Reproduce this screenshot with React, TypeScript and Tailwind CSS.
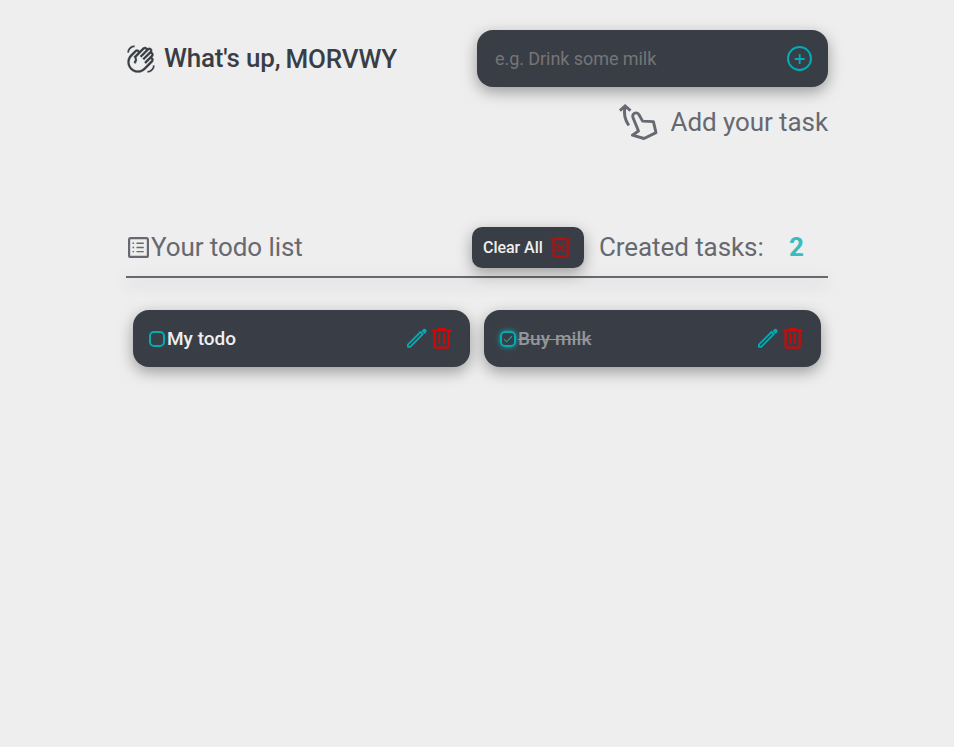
import React from 'react';
import { MdOutlineWavingHand } from 'react-icons/md';

function AddIcon() {
  return (
    <svg width="25" height="25" viewBox="0 0 25 25" fill="none" stroke="#00adb5" strokeWidth="2">
      <circle cx="12.5" cy="12.5" r="11.5" />
      <path d="M12.7 8v10M7.7 13h10" strokeWidth="1.8" />
    </svg>
  );
}

function SwipeUpIcon() {
  return (
    <svg width="42" height="38" viewBox="0 0 42 38" fill="none" stroke="currentColor" strokeWidth="2.9">
      <path d="M1.9 7.7L7.1 3l5.4 4.7M7.1 3.5C5.6 10 7 17 10.8 22.5" />
      <path d="M20.5 28L15 14.6a3.3 3.3 0 0 1 6-2.8L24.6 18.1l10.8.5L38 29.6 26 35.5l-11.6-3.4z" strokeLinejoin="round" />
    </svg>
  );
}

function ListIcon() {
  return (
    <svg className="mr-[2px] ml-[2px]" width="21" height="21" viewBox="0 0 21 21" fill="none" stroke="currentColor">
      <rect x="1.1" y="1.1" width="18.8" height="18.8" rx="1.5" strokeWidth="2.2" />
      <path d="M4.5 6.3h1.6M4.5 10.5h1.6M4.5 14.6h1.6M8.5 6.3h7.3M8.5 10.5h7.3M8.5 14.6h7.3" strokeWidth="1.4" />
    </svg>
  );
}

function PencilIcon() {
  return (
    <svg width="22" height="21" viewBox="0 0 22 21" fill="none" stroke="#00adb5">
      <path d="M1.9 18.8v-2.2L14.6 4l2.2 2.2L4.2 18.8z" strokeWidth="1.8" strokeLinejoin="round" />
      <path d="M15.7 2.9l1.3-1.3a2 2 0 0 1 3 3L18.7 5.9z" fill="#00adb5" stroke="none" />
    </svg>
  );
}

function TrashIcon({ cross = false }: { cross?: boolean }) {
  return (
    <svg width="22" height="21" viewBox="0 0 22 21" fill="none" stroke="currentColor" strokeWidth="2">
      <path d="M.7 2.3h19.8" />
      <path d="M6 2l1.2-2h6.8l1.2 2z" fill="currentColor" stroke="none" />
      <path d="M3.6 2.5v15.8a1.3 1.3 0 0 0 1.3 1.3h11.5a1.3 1.3 0 0 0 1.3-1.3V2.5" strokeWidth="2.2" />
      {cross ? <path d="M6.6 7.2l7.8 7.8M14.4 7.2L6.6 15" strokeWidth="1.8" /> : <path d="M8.3 5v11M13 5v11" strokeWidth="1.8" />}
    </svg>
  );
}

function Todo({ title, done = false }: { title: string; done?: boolean }) {
  return (
    <li className="flex h-[57px] w-[337px] items-center rounded-[16px] bg-[#393e46] pr-[17px] pl-4 shadow-[0_5px_15px_rgba(0,0,0,0.35)]">
      <span className={'mt-px mr-[2px] flex size-4 items-center justify-center rounded-[5px] border-2 border-[#00adb5] ' + (done ? 'shadow-[0_0_5px_#00adb5]' : '')}>
        {done && (
          <svg width="10" height="10" viewBox="0 0 10 10" fill="none" stroke="#00adb5" strokeWidth="1.1"><path d="M1 5.2l2.6 2.6L9 2.2" /></svg>
        )}
      </span>
      <span className={'text-[19px] leading-6 font-medium ' + (done ? 'tracking-[0.08px] text-[#949699] line-through decoration-1' : 'text-[#eeeeee]')}>{title}</span>
      <span className="ml-auto flex items-center gap-[3px] text-[#d10808]"><PencilIcon /><TrashIcon /></span>
    </li>
  );
}

export default function App() {
  return (
    <div className="min-h-screen bg-[#eeeeee] pt-[30px] font-['Roboto',sans-serif] text-[#393e46]">
      <div className="mx-auto w-[702px]">
        <header className="flex h-[57px] items-center justify-between">
          <h1 className="flex items-center text-[26px] leading-8 font-medium">
            <MdOutlineWavingHand className="mr-2 size-[30px] stroke-[#eeeeee] stroke-[0.2]" />
            <span className="mr-[5px] pb-[2px] tracking-[-0.16px]">What's up,</span>
            <span className="tracking-[-0.15px]">MORVWY</span>
          </h1>
          <div className="flex h-[57px] w-[351px] items-center justify-between rounded-[16px] bg-[#393e46] pr-4 pl-[18px] shadow-[0_5px_15px_rgba(0,0,0,0.35)]">
            <span className="text-[18px] tracking-[-0.06px] text-[#757575]">e.g. Drink some milk</span>
            <AddIcon />
          </div>
        </header>
        <div className="mt-[15px] flex h-10 items-center justify-end gap-[11px] text-[26px] tracking-[-0.08px] text-[#66696f]">
          <SwipeUpIcon />
          <span>Add your task</span>
        </div>
        <div className="mt-[76px] flex h-[58px] items-center text-[26px] tracking-[-0.08px] text-[#66696f]">
          <ListIcon />
          <span>Your todo list</span>
          <button className="ml-auto flex h-[41px] w-28 items-center justify-between rounded-[10px] bg-[#393e46] pr-3 pl-[11px] text-[16px] font-medium tracking-[-0.04px] text-[#eeeeee] shadow-[0_5px_15px_rgba(0,0,0,0.35)]">
            <span className="pt-px">Clear All</span>
            <span className="text-[#b01212]"><TrashIcon cross /></span>
          </button>
          <span className="ml-[15px] w-[165px] whitespace-nowrap">Created tasks:</span>
          <span className="mr-6 ml-[25px] w-[15px] pt-px font-bold tracking-normal text-[#39bbc2]">2</span>
        </div>
        <div className="h-[2px] bg-[#66696f] shadow-[0_5px_15px_rgba(0,0,0,0.26)]" />
        <ul className="mt-8 flex justify-center gap-[14px]">
          <Todo title="My todo" />
          <Todo title="Buy milk" done />
        </ul>
      </div>
    </div>
  );
}
